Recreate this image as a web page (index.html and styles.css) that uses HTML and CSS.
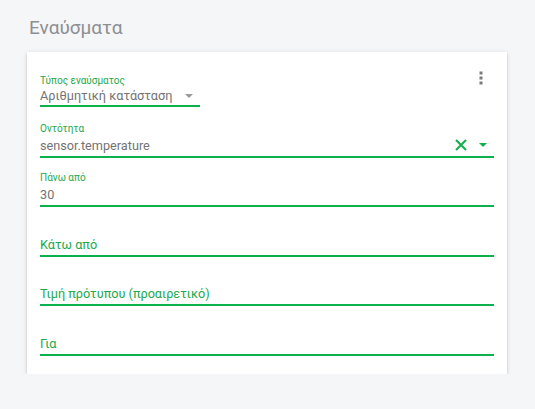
FILE: index.html
```html
<!DOCTYPE html>
<html lang="el">

<head>
  <meta charset="UTF-8">
  <meta name="viewport" content="width=device-width, initial-scale=1.0">
  <title>Εναύσματα</title>
  <link rel="stylesheet" href="styles.css">
</head>

<body>

  <div class="page">
    <h2 class="title">Εναύσματα</h2>

    <div class="card">
      <div class="card-top">
        <div class="field dropdown">
          <div class="label">Τύπος εναύσματος</div>
          <div class="value-row">
            <span class="value">Αριθμητική κατάσταση</span>
            <svg class="caret gray" width="8" height="4" viewBox="0 0 8 4"><path d="M0 0h8L4 4z" /></svg>
          </div>
        </div>
        <svg class="more" width="4" height="14" viewBox="0 0 4 14">
          <rect x="0.5" y="0.5" width="3" height="3" />
          <rect x="0.5" y="5.5" width="3" height="3" />
          <rect x="0.5" y="10.5" width="3" height="3" />
        </svg>
      </div>

      <div class="field">
        <div class="label">Οντότητα</div>
        <div class="value-row">
          <span class="value">sensor.temperature</span>
          <svg class="clear" width="12" height="12" viewBox="0 0 12 12"><path d="M1 1l10 10M11 1L1 11" /></svg>
          <svg class="caret green" width="8" height="4" viewBox="0 0 8 4"><path d="M0 0h8L4 4z" /></svg>
        </div>
      </div>

      <div class="field">
        <div class="label">Πάνω από</div>
        <div class="value-row">
          <span class="value">30</span>
        </div>
      </div>

      <div class="field">
        <div class="label"></div>
        <div class="value-row">
          <span class="placeholder">Κάτω από</span>
        </div>
      </div>

      <div class="field">
        <div class="label"></div>
        <div class="value-row">
          <span class="placeholder">Τιμή πρότυπου (προαιρετικό)</span>
        </div>
      </div>

      <div class="field">
        <div class="label"></div>
        <div class="value-row">
          <span class="placeholder">Για</span>
        </div>
      </div>
    </div>
  </div>

</body>

</html>
```

FILE: styles.css
```css
body {
  margin: 0;
  background-color: #f5f6f8;
  font-family: Roboto, "Liberation Sans", sans-serif;
}

.page {
  padding: 15px 28px 0 27px;
}

.title {
  margin: 0 0 11px 2px;
  font-size: 19px;
  font-weight: 400;
  line-height: 26px;
  color: #8c8f93;
}

.card {
  width: 454px;
  padding: 22px 13px 18px 13px;
  background-color: #fff;
  box-shadow: 0 2px 2px rgba(0, 0, 0, 0.14), 0 1px 5px rgba(0, 0, 0, 0.12), 0 3px 1px -2px rgba(0, 0, 0, 0.2);
}

.card-top {
  display: flex;
  justify-content: space-between;
  align-items: flex-start;
  margin-bottom: 1px;
}

.more {
  margin: -3px 11px 0 0;
  fill: #7a7a7a;
}

.field {
  padding-top: 13.5px;
}

.field.dropdown {
  padding-top: 0;
  width: 160px;
}

.label {
  height: 13px;
  font-size: 10px;
  line-height: 13px;
  color: #1fa94b;
}

.value-row {
  display: flex;
  align-items: center;
  height: 19px;
  margin-top: 1px;
  padding-bottom: 1px;
  border-bottom: 2px solid #0db14b;
  font-size: 12.7px;
  line-height: 19px;
  white-space: nowrap;
}

.dropdown .value-row {
  height: 17px;
  margin-top: 0;
  line-height: 17px;
}

.value {
  flex: 1;
  color: #737373;
}

.placeholder {
  flex: 1;
  color: #21a94c;
}

.caret.gray {
  margin-right: 7px;
  fill: #9a9a9a;
}

.caret.green {
  margin: 0 7px 0 12px;
  fill: #0db14b;
}

.clear {
  stroke: #13b04b;
  stroke-width: 2;
}
```
